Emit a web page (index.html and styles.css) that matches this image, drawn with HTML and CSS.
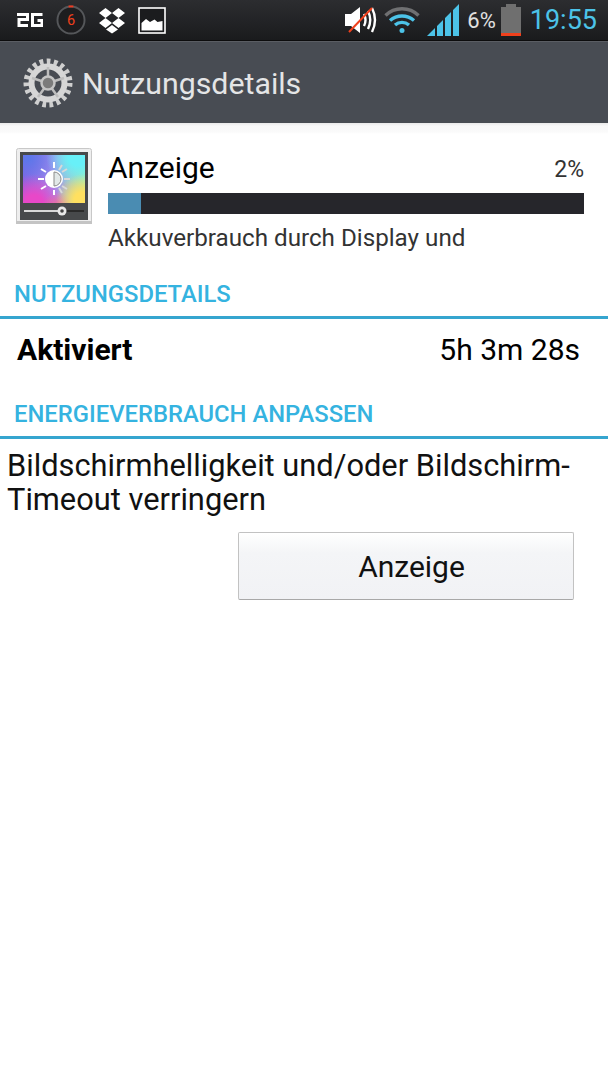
FILE: index.html
```html
<!DOCTYPE html>
<html lang="de">
<head>
    <meta charset="UTF-8">
    <meta name="viewport" content="width=device-width, initial-scale=1.0">
    <title>Nutzungsdetails</title>
    <link rel="stylesheet" href="styles.css">
</head>
<body>
    <div class="status-bar">
        <div class="status-left">
            <svg class="icon-2g" width="26" height="14" viewBox="0 0 26 14">
                <path d="M0 1.500h10.500v5H2v6h9M25.500 1.500H15.500v11h9.500v-5h-4.500" fill="none" stroke="#fff" stroke-width="3"/>
            </svg>
            <svg class="icon-count" width="30" height="30" viewBox="0 0 31 31">
                <circle cx="15.500" cy="15.500" r="14" fill="#1d1d1f" stroke="#55575a" stroke-width="2"/>
                <path d="M13 1.500h5" stroke="#f03a20" stroke-width="2"/>
                <text x="15.500" y="21" text-anchor="middle" class="count-digit">6</text>
            </svg>
            <svg class="icon-dropbox" width="28" height="27" viewBox="0 0 28 27">
                <path d="M7.500 1 14 6l-6.500 5L1 6zM20.500 1 27 6l-6.500 5L14 6zM7.500 11l6.500 5-6.500 5L1 16zM20.500 11l6.500 5-6.500 5L14 16z" fill="#fff"/>
                <path d="M8 22.500l6-4.500 6 4.500-6 4z" fill="#fff"/>
            </svg>
            <svg class="icon-picture" width="28" height="27" viewBox="0 0 28 27">
                <rect x="1" y="1" width="26" height="25" fill="#1b1c1e" stroke="#fff" stroke-width="1.600"/>
                <path d="M3.500 23.500V16l4.500-4 4 3 4.500-2.500 3 2.500 5-1v9.500z" fill="#fff"/>
            </svg>
        </div>
        <div class="status-right">
            <svg class="icon-sound" width="34" height="30" viewBox="0 0 34 30">
                <path d="M1 9h6l9-7v26l-9-7H1z" fill="#fff"/>
                <path d="M20 9c2 4 2 8 0 12M24 6c3 6 3 12 0 18M28 3c4 8 4 16 0 24" fill="none" stroke="#fff" stroke-width="2.400"/>
                <path d="M5 27 28 3" stroke="#f0401c" stroke-width="2"/>
            </svg>
            <svg class="icon-wifi" width="36" height="28" viewBox="0 0 36 28">
                <path d="M1.500 9.500c9-9 24-9 33 0" fill="none" stroke="#6f7072" stroke-width="3.400"/>
                <path d="M6 14.500c7-6 17-6 24 0M11 19c4-3.500 10-3.500 14 0" fill="none" stroke="#4cc3e8" stroke-width="3.400"/>
                <circle cx="18" cy="24.500" r="2.500" fill="#4cc3e8"/>
            </svg>
            <svg class="icon-signal" width="33" height="32" viewBox="0 0 33 32">
                <path d="M1 32 9 24v8zM11 22l6-6v16h-6zM19 14l6-6v24h-6zM27 6l6-6v32h-6z" fill="#4cc3e8"/>
            </svg>
            <span class="battery-text">6%</span>
            <svg class="icon-battery" width="20" height="32" viewBox="0 0 20 32">
                <path d="M0 3h5V0h10v3h5v29H0z" fill="#6f6f6f"/>
                <rect x="0" y="29" width="20" height="3" fill="#f0401c"/>
            </svg>
            <span class="clock">19:55</span>
        </div>
    </div>

    <div class="action-bar">
        <svg class="icon-gear" width="50" height="52" viewBox="0 0 50 50">
            <circle cx="25" cy="25" r="21.500" fill="none" stroke="#cfcfcf" stroke-width="6" stroke-dasharray="3.700 3.400"/>
            <circle cx="25" cy="25" r="16.500" fill="none" stroke="#d6d6d6" stroke-width="6"/>
            <path d="M25 9v10M9 20l11 3.500M15 39l6.500-9M35 39l-6.500-9M41 20l-11 3.500" stroke="#bdbdbd" stroke-width="2.500"/>
            <circle cx="25" cy="25" r="6.500" fill="#7b7b7b" stroke="#c4c4c4" stroke-width="2.500"/>
        </svg>
        <span class="action-title">Nutzungsdetails</span>
    </div>

    <div class="content">
        <div class="usage-row">
            <svg class="icon-display" width="76" height="76" viewBox="0 0 76 76">
                <defs>
                    <linearGradient id="base" x1="0" y1="0" x2="1" y2="0">
                        <stop offset="0" stop-color="#8a62e2"/>
                        <stop offset="0.500" stop-color="#a090ee"/>
                        <stop offset="1" stop-color="#a8f0b0"/>
                    </linearGradient>
                    <radialGradient id="blue">
                        <stop offset="0" stop-color="#5a78ea"/>
                        <stop offset="1" stop-color="#5a78ea" stop-opacity="0"/>
                    </radialGradient>
                    <radialGradient id="cyan">
                        <stop offset="0.300" stop-color="#68f0f8"/>
                        <stop offset="1" stop-color="#68f0f8" stop-opacity="0"/>
                    </radialGradient>
                    <radialGradient id="pink">
                        <stop offset="0.300" stop-color="#e848c8"/>
                        <stop offset="1" stop-color="#e848c8" stop-opacity="0"/>
                    </radialGradient>
                    <radialGradient id="yellow">
                        <stop offset="0.300" stop-color="#ffe060"/>
                        <stop offset="1" stop-color="#ffe060" stop-opacity="0"/>
                    </radialGradient>
                    <radialGradient id="rose">
                        <stop offset="0" stop-color="#f86a90"/>
                        <stop offset="1" stop-color="#f86a90" stop-opacity="0"/>
                    </radialGradient>
                    <clipPath id="screen">
                        <rect x="7" y="7" width="62" height="48"/>
                    </clipPath>
                </defs>
                <rect x="0.500" y="0.500" width="75" height="75" rx="2" fill="#eeeeee" stroke="#c8c8c8"/>
                <rect x="0" y="73" width="76" height="3" fill="#c4c4c4"/>
                <rect x="4" y="4" width="68" height="68" fill="#47494b"/>
                <g clip-path="url(#screen)">
                    <rect x="7" y="7" width="62" height="48" fill="url(#base)"/>
                    <circle cx="12" cy="10" r="30" fill="url(#blue)"/>
                    <circle cx="62" cy="8" r="32" fill="url(#cyan)"/>
                    <circle cx="18" cy="56" r="30" fill="url(#pink)"/>
                    <circle cx="42" cy="60" r="16" fill="url(#rose)"/>
                    <circle cx="66" cy="52" r="26" fill="url(#yellow)"/>
                </g>
                <path d="M38 20v-6M30 24l-5-3M28 31h-6M30 38l-5 3M38 42v5" stroke="#fff" stroke-width="2"/>
                <path d="M46 24l5-3M48 31h6M46 38l5 3M43 22l3-5M43 40l3 5" stroke="#d8d8d8" stroke-width="2"/>
                <circle cx="38" cy="31" r="9" fill="#fff"/>
                <path d="M38 24a7 7 0 0 1 0 14z" fill="#e2e8e8" stroke="#8a8a8a"/>
                <rect x="8" y="62" width="60" height="2" fill="#2a2a2a"/>
                <rect x="8" y="62" width="38" height="2" fill="#d8d8d8"/>
                <circle cx="46" cy="63" r="4.500" fill="#e8e8e8"/>
                <circle cx="46" cy="63" r="1.800" fill="#444"/>
            </svg>
            <div class="usage-info">
                <div class="usage-head">
                    <span class="usage-name">Anzeige</span>
                    <span class="usage-percent">2%</span>
                </div>
                <div class="bar"><div class="bar-fill" style="width: 7%"></div></div>
                <div class="usage-desc">Akkuverbrauch durch Display und</div>
            </div>
        </div>

        <h2 class="section first">NUTZUNGSDETAILS</h2>
        <div class="detail-row">
            <strong>Aktiviert</strong>
            <span>5h 3m 28s</span>
        </div>

        <h2 class="section second">ENERGIEVERBRAUCH ANPASSEN</h2>
        <p class="advice">Bildschirmhelligkeit und/oder Bildschirm-<br>Timeout verringern</p>
        <div class="button-row">
            <button class="btn">Anzeige</button>
        </div>
    </div>
</body>
</html>
```

FILE: styles.css
```css
html, body {
    margin: 0;
    padding: 0;
}
body {
    width: 608px;
    height: 1080px;
    overflow: hidden;
    background-color: #fff;
    font-family: Roboto, "Noto Sans", sans-serif;
    color: #000;
}
svg {
    display: block;
    flex: none;
}
.status-bar {
    height: 41px;
    box-sizing: border-box;
    border-bottom: 1px solid #0c0c0d;
    background: linear-gradient(#2c2d30, #1a1b1d);
    display: flex;
    justify-content: space-between;
    align-items: center;
    padding: 0 11px 0 17px;
}
.status-left, .status-right {
    display: flex;
    align-items: center;
}
.icon-count {
    margin-left: 13px;
}
.icon-dropbox {
    margin-left: 12px;
}
.icon-picture {
    margin-left: 12px;
}
.count-digit {
    font-size: 15px;
    fill: #f0401c;
}
.icon-sound {
    margin-right: 6px;
}
.icon-wifi {
    margin-right: 6px;
}
.icon-signal {
    margin-right: 8px;
}
.battery-text {
    font-size: 22px;
    color: #e0e0e0;
    margin-right: 5px;
}
.clock {
    font-size: 27px;
    color: #4cc3e8;
    margin-left: 9px;
}
.action-bar {
    height: 82px;
    box-sizing: border-box;
    background-color: #484c53;
    border-top: 1px solid #5a5d63;
    display: flex;
    align-items: center;
    padding-left: 23px;
}
.action-title {
    font-size: 30.300px;
    color: #e4e5e6;
    margin-left: 9px;
    padding-top: 2px;
}
.content {
    background: linear-gradient(#e9e9e9, #f8f8f9 3px, #fafafa 9px, #fff 11px);
    padding-top: 25px;
}
.usage-row {
    display: flex;
    padding: 0 24px 0 16px;
}
.usage-info {
    flex: 1;
    margin-left: 16px;
}
.usage-head {
    display: flex;
    justify-content: space-between;
    align-items: flex-end;
    height: 37px;
    padding-bottom: 8px;
}
.usage-name {
    font-size: 30px;
    line-height: 35px;
}
.usage-percent {
    font-size: 23px;
    line-height: 30px;
    color: #333;
}
.bar {
    height: 21px;
    background-color: #26262b;
}
.bar-fill {
    height: 100%;
    background-color: #4a8cb2;
}
.usage-desc {
    font-size: 24.200px;
    line-height: 28px;
    color: #333;
    margin-top: 10px;
}
.section {
    margin: 0;
    font-size: 23.800px;
    font-weight: 500;
    line-height: 26px;
    color: #35b3e0;
    padding: 0 14px 9px;
    border-bottom: 3px solid #35a5cf;
}
.section.first {
    margin-top: 29px;
}
.section.second {
    margin-top: 22px;
}
.detail-row {
    display: flex;
    justify-content: space-between;
    align-items: center;
    font-size: 30px;
    height: 60px;
    padding: 0 28px 0 17px;
}
.detail-row strong {
    font-weight: 700;
}
.advice {
    margin: 0;
    padding: 10px 7px 0;
    font-size: 30.800px;
    line-height: 34px;
    color: #111;
}
.button-row {
    display: flex;
    justify-content: flex-end;
    padding: 15px 34px 0 0;
}
.btn {
    width: 336px;
    height: 68px;
    box-sizing: border-box;
    padding: 0 0 0 11px;
    font-family: inherit;
    font-size: 30px;
    color: #111;
    background: linear-gradient(#ffffff, #f4f5f7 30%, #f1f2f5);
    border: 1px solid #c2c2c2;
    border-bottom-color: #a8a8a8;
    border-radius: 2px;
}
```
